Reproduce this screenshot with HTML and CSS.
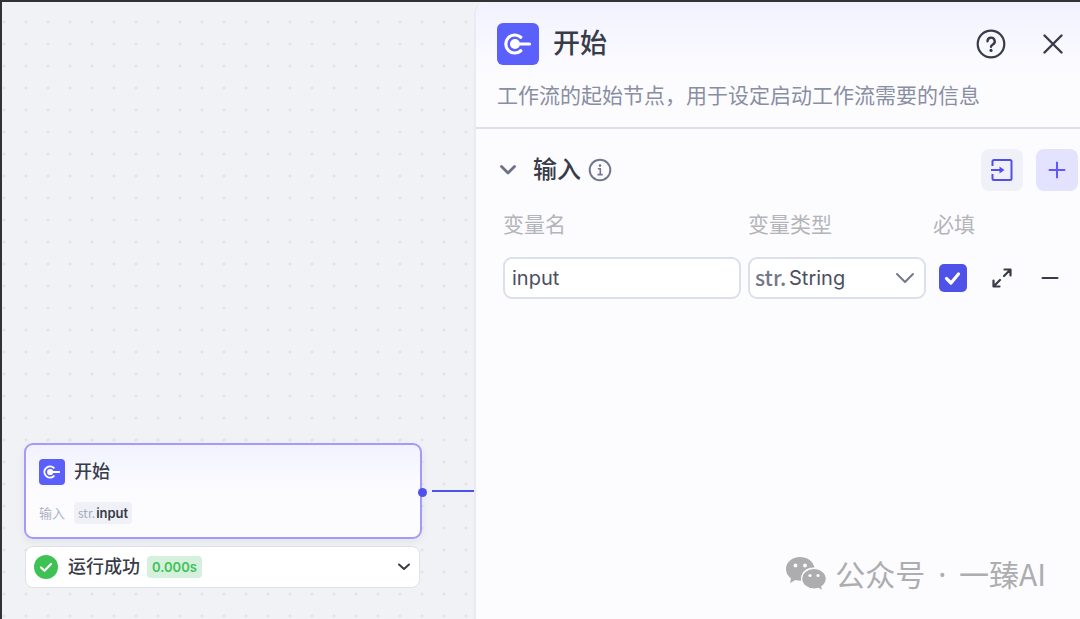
FILE: index.html
```html
<!DOCTYPE html>
<html lang="zh-CN">
<head>
<meta charset="utf-8">
<meta name="viewport" content="width=device-width, initial-scale=1">
<title>开始</title>
<link rel="stylesheet" href="styles.css">
</head>
<body>
<svg width="0" height="0" class="sprite" aria-hidden="true">
  <symbol id="start" viewBox="0 0 42 42">
    <circle cx="18" cy="21" r="5" fill="currentColor"/>
    <path d="M18 21H32.500" fill="none" stroke="currentColor" stroke-width="3.200" stroke-linecap="round"/>
    <path d="M23.800 14.300A9 9 0 1 0 23.800 27.700" fill="none" stroke="currentColor" stroke-width="3.200" stroke-linecap="round"/>
  </symbol>
</svg>
<main class="workspace">
  <section class="canvas" aria-label="画布">
    <div class="node-stack">
      <article class="node">
        <header class="node-head">
          <svg class="node-logo"><use href="#start"/></svg>
          <h2 class="node-title">开始</h2>
        </header>
        <div class="node-row">
          <span class="node-label">输入</span>
          <span class="chip"><span class="chip-type">str.</span><span>input</span></span>
        </div>
        <span class="port"></span>
        <span class="edge"></span>
      </article>
      <div class="result">
        <svg class="result-icon" viewBox="0 0 24 24"><circle cx="12" cy="12" r="12" fill="#3ec254"/><path d="M7 12.500l3.500 3.300L17 9" fill="none" stroke="#fff" stroke-width="2.200" stroke-linecap="round" stroke-linejoin="round"/></svg>
        <span class="result-text">运行成功</span>
        <span class="result-time">0.000s</span>
        <button class="plain result-toggle" aria-label="展开"><svg width="14" height="10" viewBox="0 0 14 10"><path d="M2 2.500l5 4.500 5-4.500" fill="none" stroke="#3b3d45" stroke-width="2" stroke-linecap="round" stroke-linejoin="round"/></svg></button>
      </div>
    </div>
  </section>

  <aside class="panel">
    <header class="panel-head">
      <div class="title-row">
        <svg class="panel-logo"><use href="#start"/></svg>
        <h1 class="panel-title">开始</h1>
        <button class="plain" aria-label="帮助"><svg width="30" height="30" viewBox="0 0 30 30" fill="none" stroke="#383c48" stroke-linecap="round" stroke-linejoin="round"><circle cx="15" cy="15" r="13.300" stroke-width="2.200"/><path d="M11.500 12.300a3.600 3.600 0 1 1 5.400 3.100c-1.300.8-1.900 1.300-1.900 2.400" stroke-width="2.400"/><circle cx="15" cy="21.400" r="1.600" fill="#383c48" stroke="none"/></svg></button>
        <button class="plain" aria-label="关闭"><svg width="20" height="20" viewBox="0 0 20 20"><path d="M1.500 1.500l17 17M18.500 1.500l-17 17" stroke="#383c48" stroke-width="2.400" stroke-linecap="round"/></svg></button>
      </div>
      <p class="description">工作流的起始节点，用于设定启动工作流需要的信息</p>
    </header>

    <section class="inputs">
      <div class="section-head">
        <button class="plain" aria-label="收起"><svg width="18" height="12" viewBox="0 0 18 12"><path d="M2.500 2.500L9 9l6.500-6.500" fill="none" stroke="#6b7186" stroke-width="2.800" stroke-linecap="round" stroke-linejoin="round"/></svg></button>
        <h2 class="section-title">输入</h2>
        <svg class="info" width="24" height="24" viewBox="0 0 24 24" fill="none" stroke="#73798d"><circle cx="12" cy="12" r="10.300" stroke-width="2"/><path d="M9.800 10.700h2.500v5.800M9.500 16.600h5.200" stroke-width="1.600"/><circle cx="12" cy="7.600" r="1.300" fill="#73798d" stroke="none"/></svg>
        <button class="plain tile" aria-label="导入"><svg width="24" height="24" viewBox="0 0 24 24" fill="none" stroke="#514fe8" stroke-width="2"><path d="M2.500 8V3.500q0-1.500 1.500-1.500h16q1.500 0 1.500 1.500v17q0 1.500-1.500 1.500h-16q-1.500 0-1.500-1.500V16M1 12h9"/><path d="M9.500 8.500v7l5-3.500z" fill="#514fe8" stroke="none"/></svg></button>
        <button class="plain tile tile-add" aria-label="添加"><svg width="18" height="18" viewBox="0 0 18 18"><path d="M9 1.500v15M1.500 9h15" stroke="#6057fa" stroke-width="2" stroke-linecap="round"/></svg></button>
      </div>
      <form class="variables">
        <label class="column-name" for="name">变量名</label>
        <label class="column-name" for="type">变量类型</label>
        <label class="column-name column-last" for="required">必填</label>
        <input class="field" id="name" type="text" value="input">
        <div class="select-box">
          <select class="field select" id="type"><option>String</option></select>
          <span class="prefix">str.</span>
          <svg class="select-arrow" width="22" height="14" viewBox="0 0 22 14"><path d="M3 3l8 8 8-8" fill="none" stroke="#73798d" stroke-width="2" stroke-linecap="round" stroke-linejoin="round"/></svg>
        </div>
        <span class="check-box">
          <input class="check" id="required" type="checkbox" checked>
          <svg class="check-mark" viewBox="0 0 28 28"><path d="M7.500 14.500l4.500 4.500 7.500-9" fill="none" stroke="#fff" stroke-width="3.200" stroke-linecap="round" stroke-linejoin="round"/></svg>
        </span>
        <button type="button" class="plain" aria-label="放大"><svg width="22" height="22" viewBox="0 0 22 22" fill="none" stroke="#383c48" stroke-width="2.200" stroke-linecap="round" stroke-linejoin="round"><path d="M13 9l5.500-5.500M13.500 2.500h6v6M9 13l-5.500 5.500M2.500 13.500v6h6"/></svg></button>
        <button type="button" class="plain" aria-label="删除"><svg width="18" height="6" viewBox="0 0 18 6"><path d="M1.500 3h15" stroke="#383c48" stroke-width="2" stroke-linecap="round"/></svg></button>
      </form>
    </section>

    <footer class="signature">
      <svg width="42" height="36" viewBox="0 0 42 36"><path fill="#adadaf" d="M15 1C7 1 1 6.300 1 13c0 4 2 7.200 5 9.500L5 27l5.500-3c2 .6 4 .9 6 .8C15 17 21 11 29.500 11.500 28 5 22 1 15 1z"/><path fill="#adadaf" stroke="#fcfcff" stroke-width="1.200" d="M29 12.500c-7 0-12.300 4.500-12.300 10.300S22 33 29 33c1.500 0 3-.2 4.300-.6L38 35l-1.300-4.200c2.800-2 4.600-4.800 4.600-8 0-5.800-5.300-10.300-12.300-10.300z"/><g fill="#fcfcff"><circle cx="10.500" cy="9.500" r="1.900"/><circle cx="20" cy="9.500" r="1.900"/><circle cx="25" cy="19.500" r="1.600"/><circle cx="33" cy="19.500" r="1.600"/></g></svg>
      <span>公众号<span class="separator"> · </span>一臻AI</span>
    </footer>
  </aside>
</main>
</body>
</html>
```

FILE: styles.css
```css
* {
  box-sizing: border-box;
}

body {
  margin: 0;
  font-family: Inter, "Noto Sans CJK SC", sans-serif;
  color: #383c48;
}

h1, h2, p {
  margin: 0;
}

.sprite {
  position: absolute;
}

.plain {
  display: flex;
  align-items: center;
  justify-content: center;
  padding: 0;
  border: 0;
  background: none;
}

.workspace {
  display: flex;
  min-height: 100vh;
  border-top: 2px solid #333136;
  border-left: 2px solid #333136;
  background: #f1f2f5;
}

.canvas {
  position: relative;
  flex: 1;
  background-image: radial-gradient(circle, #e3e4e7 1px, transparent 2px);
  background-size: 22px 22px;
  background-position: -9px 9px;
}

.node-stack {
  position: absolute;
  top: 441px;
  left: 22px;
  width: 398px;
}

.node {
  position: relative;
  padding: 13px;
  border: 2px solid #a39bfb;
  border-radius: 9px;
  background: linear-gradient(#f2f2ff, #fcfcff 50%);
  box-shadow: 0 3px 8px #00000010;
}

.node-head {
  display: flex;
  align-items: center;
  gap: 9px;
}

.node-logo {
  width: 26px;
  height: 26px;
  border-radius: 4px;
  background: #5b60fc;
  color: #fff;
}

.node-title {
  font-size: 18px;
  line-height: 28px;
  font-weight: 500;
}

.node-row {
  display: flex;
  align-items: center;
  gap: 9px;
  margin-top: 16px;
  font-size: 13px;
  line-height: 22px;
}

.node-label {
  color: #adb1c3;
}

.chip {
  display: flex;
  gap: 1px;
  padding: 0 4px;
  border-radius: 4px;
  background: #f0f0f7;
  font-weight: 600;
}

.chip-type {
  color: #a5a9bd;
  font-family: "Noto Sans CJK SC", sans-serif;
  font-size: 12px;
  font-weight: 400;
}

.port {
  position: absolute;
  top: 43px;
  right: -7px;
  width: 9px;
  height: 9px;
  border-radius: 50%;
  background: #4e52e8;
}

.edge {
  position: absolute;
  top: 45px;
  left: 406px;
  width: 42px;
  height: 2px;
  background: #4e52e8;
}

.result {
  display: flex;
  align-items: center;
  height: 42px;
  margin: 7px 2px 0 1px;
  padding: 0 8px;
  border: 1px solid #e1e1ed;
  border-radius: 8px;
  background: #fff;
}

.result-icon {
  width: 24px;
  height: 24px;
}

.result-text {
  margin-left: 10px;
  font-size: 18px;
  line-height: 26px;
  font-weight: 500;
}

.result-time {
  margin-left: 7px;
  padding: 0 5px;
  border-radius: 4px;
  background: #d5f1de;
  color: #3ec254;
  font-size: 13px;
  line-height: 22px;
  font-weight: 600;
}

.result-toggle {
  margin-left: auto;
}

.panel {
  display: flex;
  flex-direction: column;
  flex: 0 0 606px;
  border-left: 2px solid #eaeaf5;
  border-radius: 12px 0 0 0;
  background: #fcfcff;
  z-index: 1;
}

.panel-head {
  padding: 21px 17px 16px 21px;
  border-bottom: 2px solid #dcdfec;
  border-radius: 12px 0 0 0;
  background: linear-gradient(#f2f2ff, #fcfcff 60%);
}

.title-row {
  display: flex;
  align-items: center;
  gap: 37px;
}

.panel-logo {
  width: 42px;
  height: 42px;
  margin-right: -23px;
  border-radius: 6px;
  background: #5b60fc;
  color: #fff;
}

.panel-title {
  flex: 1;
  font-size: 27px;
  line-height: 42px;
  font-weight: 500;
}

.description {
  margin-top: 16px;
  color: #8a8ea2;
  font-size: 21px;
  line-height: 30px;
  white-space: nowrap;
}

.section-head {
  display: flex;
  align-items: center;
  padding: 20px 2px 0 23px;
}

.section-title {
  margin: 0 7px 0 16px;
  font-size: 24px;
  line-height: 36px;
  font-weight: 500;
}

.tile {
  width: 42px;
  height: 42px;
  border-radius: 8px;
  background: #f0f0f8;
}

.info {
  margin-right: auto;
}

.tile-add {
  margin-left: 13px;
  background: #e3e3ff;
}

.variables {
  display: grid;
  grid-template-columns: 1fr 178px 40px 44px 38px;
  column-gap: 7px;
  row-gap: 17px;
  align-items: center;
  padding: 19px 11px 0 27px;
}

.column-name {
  color: #b4b5b9;
  font-size: 21px;
  line-height: 30px;
  white-space: nowrap;
}

.column-last {
  grid-column: span 3;
}

.field {
  width: 100%;
  height: 42px;
  padding: 0 7px;
  border: 2px solid #dcdfec;
  border-radius: 9px;
  background: #fff;
  color: #4c5060;
  font: 400 20px Inter, sans-serif;
}

.select-box {
  position: relative;
}

.select {
  padding: 0 39px;
  appearance: none;
}

.prefix {
  position: absolute;
  top: 6px;
  left: 7px;
  color: #73798d;
  font: 500 21px/28px "Noto Sans CJK SC", sans-serif;
  pointer-events: none;
}

.select-arrow {
  position: absolute;
  top: 14px;
  right: 10px;
  pointer-events: none;
}

.check-box {
  position: relative;
  width: 28px;
  height: 28px;
  justify-self: center;
}

.check {
  width: 28px;
  height: 28px;
  margin: 0;
  border-radius: 5px;
  background: #fff;
  appearance: none;
}

.check:checked {
  background: #4e52e8;
}

.check-mark {
  position: absolute;
  inset: 0;
  pointer-events: none;
}

.signature {
  display: flex;
  align-items: center;
  gap: 8px;
  margin: auto 34px 22px auto;
  color: #adadaf;
  font: 400 30px/44px "Noto Sans CJK SC", sans-serif;
}

.separator {
  padding: 0 5px;
  font-family: "Noto Sans", sans-serif;
}
```
